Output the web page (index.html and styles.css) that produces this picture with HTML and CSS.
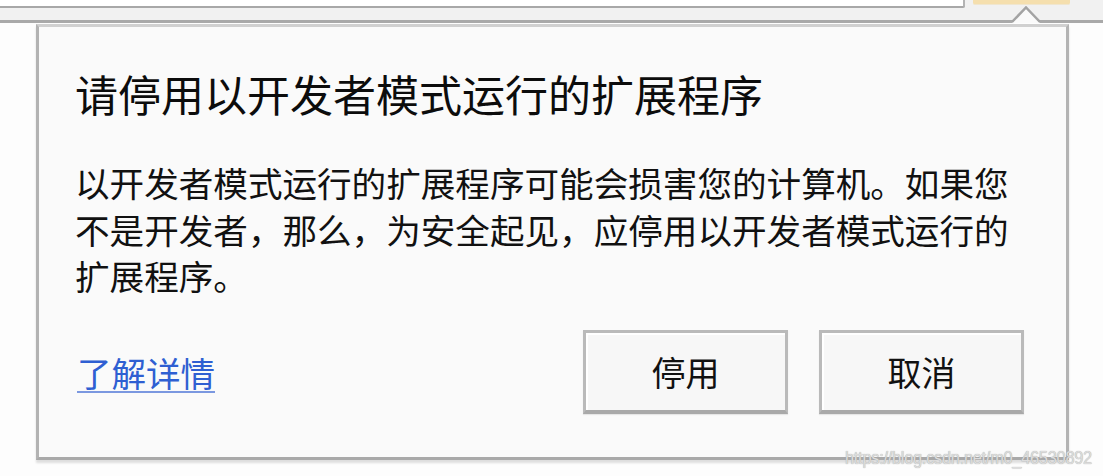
FILE: index.html
```html
<!DOCTYPE html>
<html lang="zh-CN">
<head>
  <meta charset="utf-8">
  <title>请停用以开发者模式运行的扩展程序</title>
  <link rel="stylesheet" href="styles.css">
</head>
<body>
  <div class="page">
    <div class="toolbar">
      <div class="topstrip">
        <div class="omnibox"></div>
        <div class="extbtn"></div>
      </div>
    </div>

    <div class="bubble">
      <svg class="arrow" width="28" height="18" viewBox="0 0 28 18">
        <polygon points="0,17 14,2 28,17" fill="#fafafa"/>
        <polyline points="0,16 14,1.5 28,16" fill="none" stroke="#a3a3a3" stroke-width="2.5"/>
      </svg>
      <h1>请停用以开发者模式运行的扩展程序</h1>
      <p class="msg">以开发者模式运行的扩展程序可能会损害您的计算机。如果您不是开发者，那么，为安全起见，应停用以开发者模式运行的扩展程序。</p>
      <div class="footer">
        <a class="more" href="#">了解详情</a>
        <div class="btns">
          <button type="button">停用</button>
          <button type="button">取消</button>
        </div>
      </div>
    </div>

    <div class="watermark">https://blog.csdn.net/m0_46530892</div>
  </div>
</body>
</html>
```

FILE: styles.css
```css
body{
  margin: 0;
  background: #fdfdfd;
  font-family: "Noto Sans CJK SC", "Noto Sans", sans-serif;
  color: #111;
}
.page{
  position: relative;
  width: 1103px;
  height: 476px;
  overflow: hidden;
}

/* browser toolbar strip */
.toolbar{
  height: 20px;
  background: #f1f1f1;
  border-bottom: 3px solid #a9a9a9;
}
.topstrip{
  display: flex;
  align-items: flex-start;
}
.omnibox{
  width: 963px;
  height: 6px;
  background: #fff;
  border-bottom: 2px solid #a8a8a8;
  border-right: 2px solid #b4b4b4;
  border-bottom-right-radius: 2px;
}
.extbtn{
  margin-left: 8px;
  width: 97px;
  height: 4px;
  background: #f5dfae;
  border-bottom: 1px solid #f0e6cf;
  border-radius: 0 0 2px 2px;
}

/* popup bubble */
.bubble{
  position: relative;
  margin: 1px 0 0 36px;
  width: 949px;
  padding: 40px 42px 43px 36px;
  background: #fafafa;
  border: 3px solid #b3b3b3;
  border-top-color: #d0d0d0;
  border-bottom-color: #a9a9a9;
  box-shadow: 0 3px 2px rgba(0,0,0,0.12);
}
.arrow{
  position: absolute;
  left: 973px;
  top: -21px;
}
h1{
  margin: 0;
  font-size: 43px;
  font-weight: normal;
  line-height: 52px;
  color: #0c0c0c;
}
.msg{
  margin: 40px 0 0 0;
  font-size: 34.6px;
  line-height: 46.5px;
  color: #111;
}
.footer{
  margin-top: 31px;
  display: flex;
  align-items: center;
  justify-content: space-between;
}
.more{
  margin-left: 2px;
  font-size: 34.5px;
  color: #2f5fd2;
  text-decoration: underline;
  text-decoration-color: #7b98e0;
  text-decoration-thickness: 2px;
  text-underline-offset: 4px;
}
.btns{
  display: flex;
  gap: 31px;
}
button{
  width: 205px;
  height: 84px;
  padding: 0;
  background: #f7f7f7;
  border: 3px solid #bababa;
  border-bottom: 4px solid #a9a9a9;
  box-shadow: inset 0 2px 0 #fff, inset 2px 0 0 #fff, 0 1px 1px rgba(0,0,0,0.08);
  font-family: "Noto Sans CJK SC", sans-serif;
  font-size: 34px;
  color: #111;
  cursor: pointer;
}

.watermark{
  position: absolute;
  left: 845px;
  top: 448px;
  font-family: "Liberation Sans", sans-serif;
  font-size: 18px;
  letter-spacing: -0.3px;
  color: #dcdcdc;
  text-shadow: 0 0 1px #9a9a9a;
  transform: scaleX(0.91);
  transform-origin: left center;
}
```
